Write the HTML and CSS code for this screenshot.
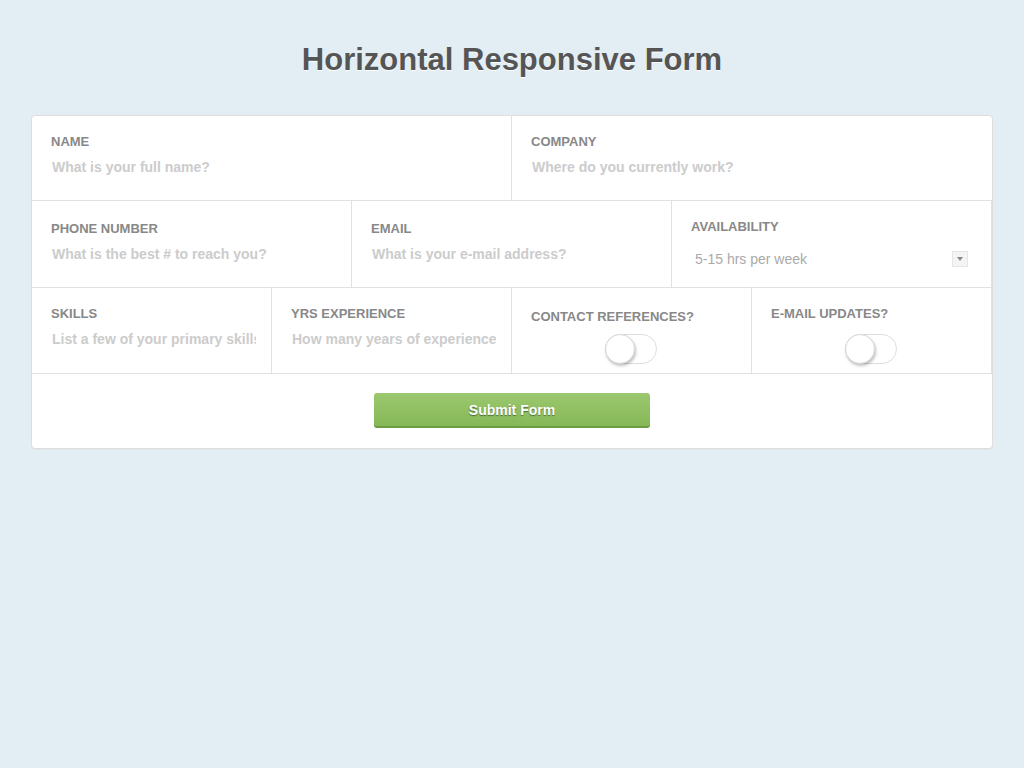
FILE: index.html
```html
<!DOCTYPE html>
<html>
<head>
<meta charset="utf-8">
<title>Horizontal Responsive Form</title>
<link rel="stylesheet" href="styles.css">
</head>
<body>
<h1 class="title">Horizontal Responsive Form</h1>
<form class="card">
  <div class="row row-1">
    <div class="cell half">
      <label class="lbl">Name</label>
      <input class="inp" type="text" placeholder="What is your full name?">
    </div>
    <div class="cell half last">
      <label class="lbl">Company</label>
      <input class="inp" type="text" placeholder="Where do you currently work?">
    </div>
  </div>
  <div class="row row-2">
    <div class="cell third">
      <label class="lbl">Phone Number</label>
      <input class="inp" type="text" placeholder="What is the best # to reach you?">
    </div>
    <div class="cell third">
      <label class="lbl">Email</label>
      <input class="inp" type="text" placeholder="What is your e-mail address?">
    </div>
    <div class="cell third avail">
      <label class="lbl">Availability</label>
      <div class="select">
        <span class="select-text">5-15 hrs per week</span>
        <span class="select-arrow"></span>
      </div>
    </div>
  </div>
  <div class="row row-3">
    <div class="cell quarter">
      <label class="lbl">Skills</label>
      <input class="inp" type="text" placeholder="List a few of your primary skills">
    </div>
    <div class="cell quarter">
      <label class="lbl">Yrs Experience</label>
      <input class="inp" type="text" placeholder="How many years of experience">
    </div>
    <div class="cell quarter toggle-cell contact">
      <label class="lbl">Contact References?</label>
      <div class="toggle"><span class="knob"></span></div>
    </div>
    <div class="cell quarter toggle-cell">
      <label class="lbl">E-mail Updates?</label>
      <div class="toggle"><span class="knob"></span></div>
    </div>
  </div>
  <div class="submit-row">
    <button class="btn" type="button">Submit Form</button>
  </div>
</form>
</body>
</html>
```
FILE: styles.css
```css
* { box-sizing: border-box; }
html, body { margin: 0; padding: 0; }
body {
  background: #e2edf4;
  font-family: "Liberation Sans", Arial, sans-serif;
  min-height: 768px;
}
.title {
  margin: 42px 0 37px;
  font-size: 31px;
  line-height: 36px;
  font-weight: bold;
  text-align: center;
  color: #555;
  text-shadow: 0 1px 0 #fff;
}
.card {
  width: 962px;
  margin: 0 auto;
  background: #fff;
  border: 1px solid #dedede;
  border-radius: 4px;
  box-shadow: 0 1px 1px rgba(0,0,0,0.03);
}
.row {
  display: flex;
}
.cell {
  padding: 18px 15px 0 19px;
  border-right: 1px solid #e1e1e1;
  border-bottom: 1px solid #e1e1e1;
  display: flex;
  flex-direction: column;
}
.row-1 .cell { height: 85px; }
.row-2 .cell { height: 87px; padding-top: 20px; }
.row-3 .cell { height: 86px; padding-top: 18px; }
.half { width: 480px; }
.half.last { border-right: none; }
.third { width: 320px; }
.quarter { width: 240px; }
.lbl {
  display: block;
  font-size: 13px;
  line-height: 16px;
  font-weight: bold;
  text-transform: uppercase;
  color: #888;
}
.inp {
  display: block;
  width: calc(100% - 1px);
  margin: 8px 0 0 1px;
  padding: 0;
  border: none;
  outline: none;
  background: transparent;
  font-family: "Liberation Sans", Arial, sans-serif;
  font-size: 14px;
  line-height: 18px;
  height: 18px;
  font-weight: bold;
  color: #666;
}
.inp::placeholder { color: #cccccc; opacity: 1; }
.row-2 .avail { padding-top: 18px; padding-right: 22px; }
.select {
  margin-top: 15px;
  display: flex;
  align-items: center;
  justify-content: space-between;
  padding-left: 4px;
  height: 18px;
}
.select-text {
  font-size: 14px;
  line-height: 18px;
  color: #aaa;
}
.select-arrow {
  width: 16px;
  height: 16px;
  background: #f4f4f4;
  border: 1px solid #e6e6e6;
  position: relative;
  margin-right: 1px;
}
.select-arrow::after {
  content: "";
  position: absolute;
  left: 4px;
  top: 5px;
  border-left: 3.5px solid transparent;
  border-right: 3.5px solid transparent;
  border-top: 4px solid #888;
}
.row-3 .toggle-cell { padding-left: 19px; padding-right: 19px; }
.row-3 .contact { padding-top: 21px; }
.toggle {
  align-self: center;
  margin: 12px 0 0 -2px;
  width: 52px;
  height: 30px;
  border: 1px solid #dedede;
  border-radius: 15px;
  position: relative;
  background: #fff;
}
.contact .toggle { margin-top: 9px; }
.knob {
  position: absolute;
  left: -1px;
  top: -1px;
  width: 30px;
  height: 30px;
  border-radius: 50%;
  background: #fff;
  border: 1px solid #d8d8d8;
  box-shadow: 1px 2px 3px rgba(0,0,0,0.25);
}
.submit-row {
  display: flex;
  justify-content: center;
  padding: 19px 0 20px;
}
.btn {
  width: 276px;
  height: 35px;
  border: none;
  border-bottom: 2px solid #6c9c45;
  border-radius: 3px;
  background: linear-gradient(#9cc86f, #85b857);
  color: #fff;
  font-family: "Liberation Sans", Arial, sans-serif;
  font-size: 14px;
  font-weight: bold;
  text-shadow: 0 1px 1px rgba(0,0,0,0.45);
  padding: 0;
  cursor: pointer;
}
```
